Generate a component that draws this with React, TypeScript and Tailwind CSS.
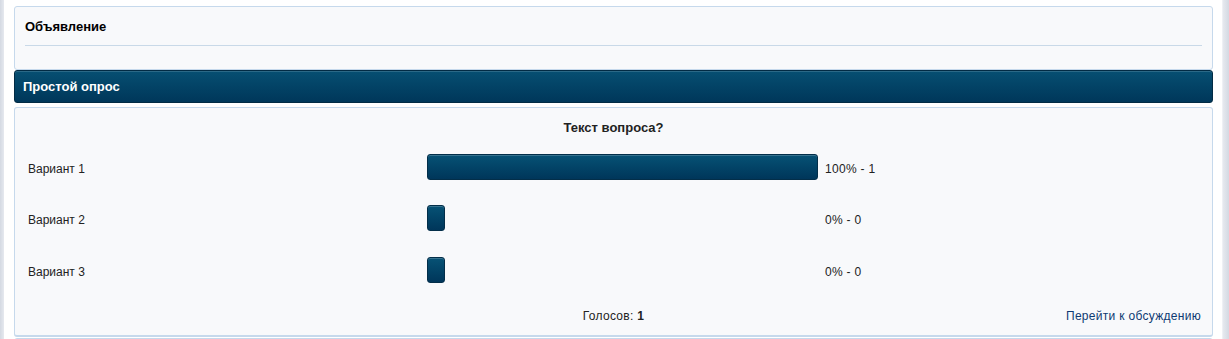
const options = [
  { label: "Вариант 1", bar: "w-[391px]", text: "100% - 1", h: "h-[51px]" },
  { label: "Вариант 2", bar: "w-[18px]", text: "0% - 0", h: "h-[52px]" },
  { label: "Вариант 3", bar: "w-[18px]", text: "0% - 0", h: "h-[51px]" },
];

export default function App() {
  return (
    <div className="flex h-[339px] overflow-hidden bg-white text-[12px] leading-[14px] text-[#222] font-['Liberation_Sans',Arial,sans-serif]">
      {/* left rail */}
      <div className="w-[4px] shrink-0 bg-gradient-to-r from-[#d4d9e2] to-[#e6e9ef]" />

      <div className="flex-1 pl-[10px] pr-[9px] pt-[6px]">
        {/* announcement */}
        <div className="h-[64px] rounded-[3px] border border-[#c6d9ec] bg-[#f8f9fb] px-[10px] pt-[13px]">
          <div className="border-b border-[#c9d9e8] pb-[11px] text-[13px] font-bold text-[#000]">Объявление</div>
        </div>

        {/* poll header */}
        <div className="flex h-[33px] items-center rounded-[3px] border border-[#022b44] bg-gradient-to-b from-[#074f72] to-[#00375a] px-[8px] text-[13px] font-bold text-white shadow-[inset_0_1px_0_rgba(255,255,255,0.15)]">
          Простой опрос
        </div>

        {/* poll body */}
        <div className="mt-[4px] rounded-[3px] border border-b-2 border-[#c6d9ec] bg-[#f8f9fb]">
          <div className="h-[35px] pt-[13px] text-center text-[13px] font-bold">Текст вопроса?</div>

          {options.map((o) => (
            <div key={o.label} className={`flex items-center ${o.h}`}>
              <div className="w-[412px] shrink-0 pl-[13px]">{o.label}</div>
              <div className="mb-[4px] w-[398px] shrink-0">
                <div
                  className={`${o.bar} h-[26px] rounded-[3px] border border-[#032e49] bg-gradient-to-b from-[#075275] to-[#00365a] shadow-[inset_0_1px_0_rgba(255,255,255,0.2)]`}
                />
              </div>
              <div className="tracking-[0.3px]">{o.text}</div>
            </div>
          ))}

          <div className="grid h-[38px] grid-cols-[1fr_auto_1fr] items-center px-[11px] tracking-[0.3px]">
            <div />
            <div>
              Голосов: <span className="font-bold">1</span>
            </div>
            <a href="#" className="justify-self-end text-[#0e3a72]">
              Перейти к обсуждению
            </a>
          </div>
        </div>

        <div className="mt-[1px] h-[20px] rounded-t-[3px] border border-[#c6d9ec] bg-[#f8f9fb]" />
      </div>

      {/* right rail */}
      <div className="w-[7px] shrink-0 border-l border-[#eef0f4] bg-gradient-to-r from-[#e6e9ef] to-[#d4d9e2]" />
    </div>
  );
}
